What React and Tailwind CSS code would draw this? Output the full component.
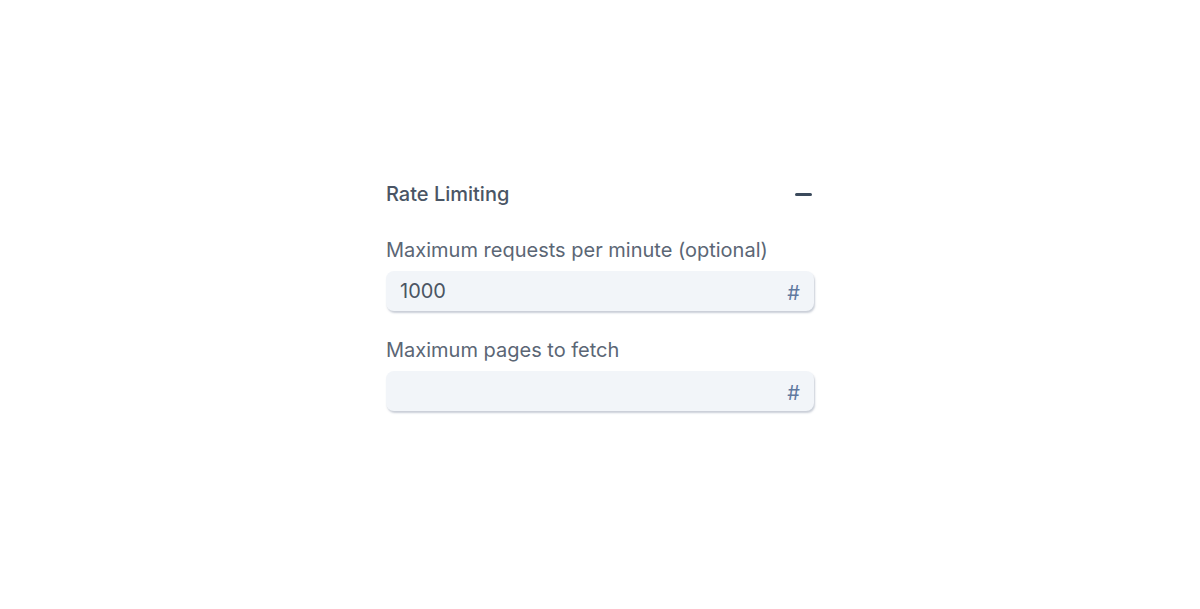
export default function App() {
  const fields = [
    { label: "Maximum requests per minute (optional)", value: "1000" },
    { label: "Maximum pages to fetch", value: "" },
  ];

  return (
    <div className="min-h-screen bg-white flex justify-center pt-[179px] font-['Inter',sans-serif]">
      <div className="w-[428px]">
        <div className="flex items-center justify-between h-[30px]">
          <h3 className="text-[20px] font-medium text-[#4a5565]">Rate Limiting</h3>
          <span className="w-[17px] h-[3px] rounded-full bg-[#3b4a5c] mr-[2px]" />
        </div>

        {fields.map((f, i) => (
          <div key={i} className={i === 0 ? "mt-[27px]" : "mt-[25px]"}>
            <label className="block text-[20px] leading-[28px] text-[#5b6675]">{f.label}</label>
            <div className="mt-[7px] h-[40px] rounded-[8px] bg-[#f2f5f9] shadow-[1px_2px_2px_rgba(100,116,139,0.35)] flex items-center justify-between pl-[14px] pr-[14px]">
              <span className="text-[20px] text-[#4b5563]">{f.value}</span>
              <span className="text-[20px] leading-none pt-[4px] text-[#6079a0]">#</span>
            </div>
          </div>
        ))}
      </div>
    </div>
  );
}
